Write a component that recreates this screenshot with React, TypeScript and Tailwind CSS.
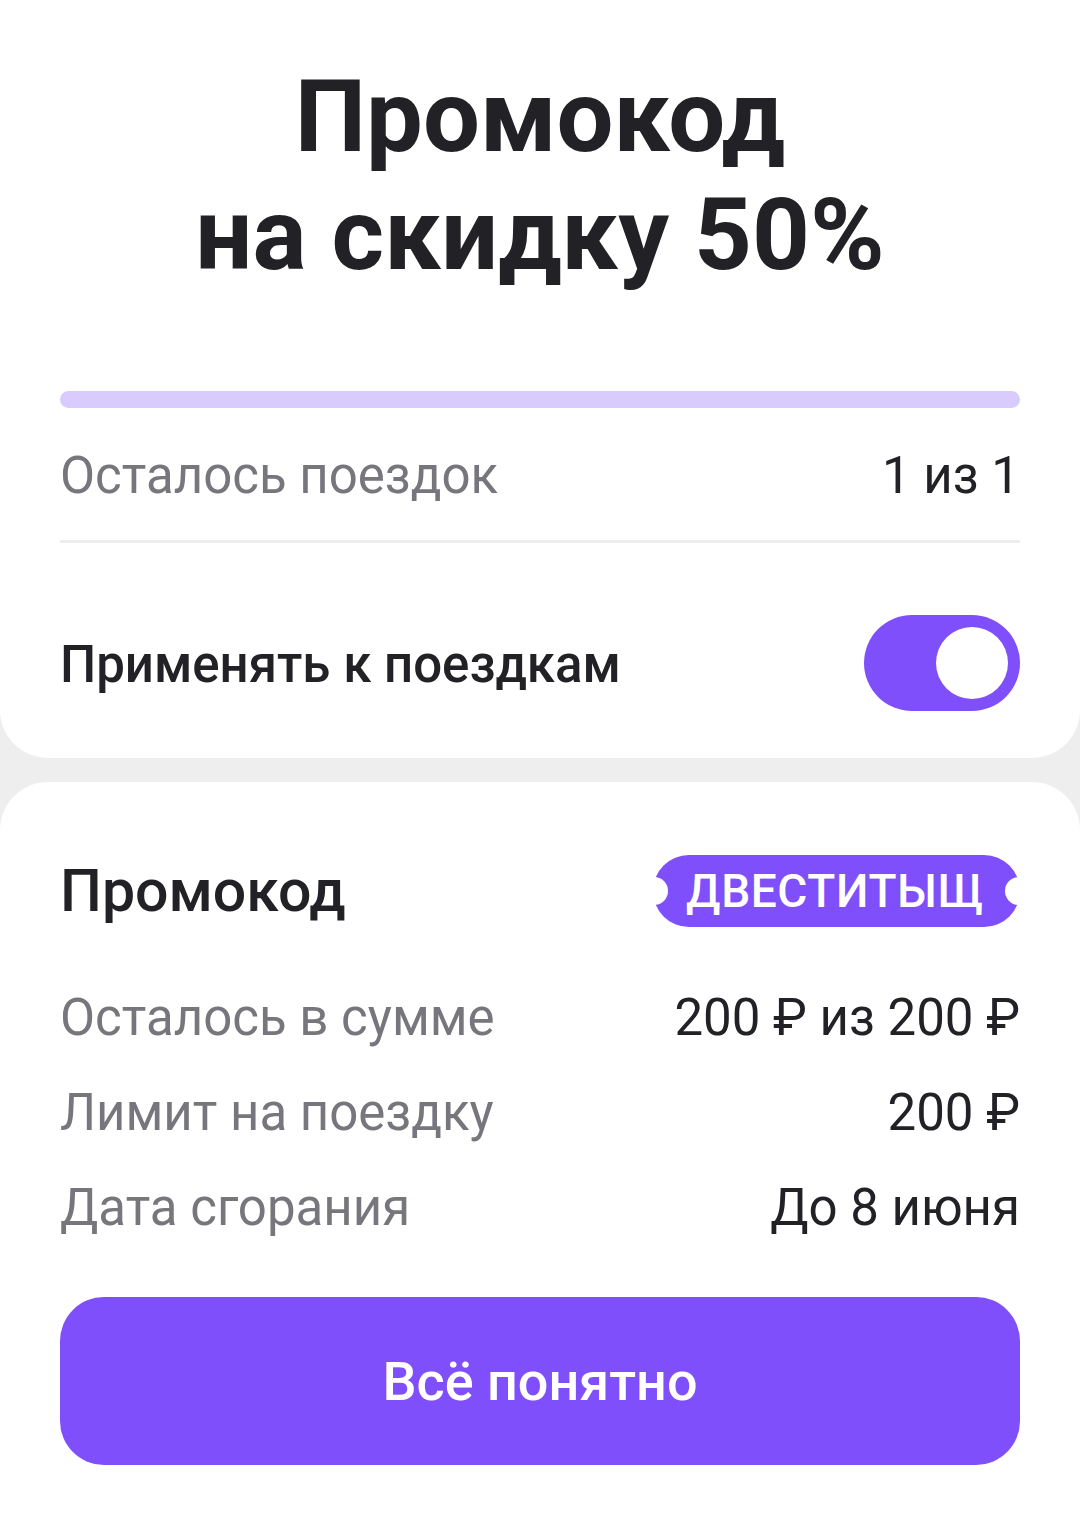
import React from "react";

const font = { fontFamily: "Roboto, 'Noto Sans', sans-serif" };

function Row({ label, value }: { label: string; value: string }) {
  return (
    <div className="flex items-center justify-between text-[51px] leading-[56px]">
      <span className="text-[#77767c]">{label}</span>
      <span className="text-[#222126]">{value}</span>
    </div>
  );
}

function Toggle() {
  return (
    <div className="flex h-[96px] w-[156px] items-center justify-end rounded-full bg-[#7f4ffc] pr-[12px]">
      <div className="h-[72px] w-[72px] rounded-full bg-white" />
    </div>
  );
}

function CodeBadge({ code }: { code: string }) {
  return (
    <div className="relative flex h-[72px] items-center rounded-full bg-[#7f4ffc] pl-[33px] pr-[36px]">
      <span className="text-[46px] font-medium leading-none tracking-[0.6px] text-white">{code}</span>
      <div className="absolute left-[-13px] top-1/2 h-[28px] w-[28px] -translate-y-1/2 rounded-full bg-white" />
      <div className="absolute right-[-13px] top-1/2 h-[28px] w-[28px] -translate-y-1/2 rounded-full bg-white" />
    </div>
  );
}

export default function App() {
  return (
    <div className="flex min-h-[1537px] w-[1080px] flex-col bg-[#eeeeee]" style={font}>
      {/* top card */}
      <div className="rounded-b-[48px] bg-white px-[60px] pb-[47px]">
        <h1 className="pt-[58px] text-center text-[101px] font-bold leading-[118px] text-[#222126]">
          Промокод
          <br />
          на скидку 50%
        </h1>

        <div className="mt-[97px] h-[17px] rounded-full bg-[#d9cbfd]" />

        <div className="mt-[40px]">
          <Row label="Осталось поездок" value="1 из 1" />
        </div>

        <div className="mt-[36px] h-[3px] bg-[#eeeeee]" />

        <div className="mt-[72px] flex h-[96px] items-center justify-between">
          <span className="pt-[4px] text-[51px] font-medium leading-[56px] text-[#222126]">
            Применять к поездкам
          </span>
          <Toggle />
        </div>
      </div>

      {/* promo card */}
      <div className="mt-[24px] flex-1 rounded-t-[48px] bg-white px-[60px]">
        <div className="mt-[73px] flex h-[72px] items-center justify-between">
          <span className="text-[59px] font-medium leading-[64px] text-[#222126]">Промокод</span>
          <CodeBadge code="ДВЕСТИТЫЩ" />
        </div>

        <div className="mt-[63px] flex flex-col gap-[39px]">
          <Row label="Осталось в сумме" value="200 ₽ из 200 ₽" />
          <Row label="Лимит на поездку" value="200 ₽" />
          <Row label="Дата сгорания" value="До 8 июня" />
        </div>

        <button className="mt-[61px] flex h-[168px] w-full items-center justify-center rounded-[44px] bg-[#7f4ffc] text-[54px] font-medium text-white">
          Всё понятно
        </button>
      </div>
    </div>
  );
}
